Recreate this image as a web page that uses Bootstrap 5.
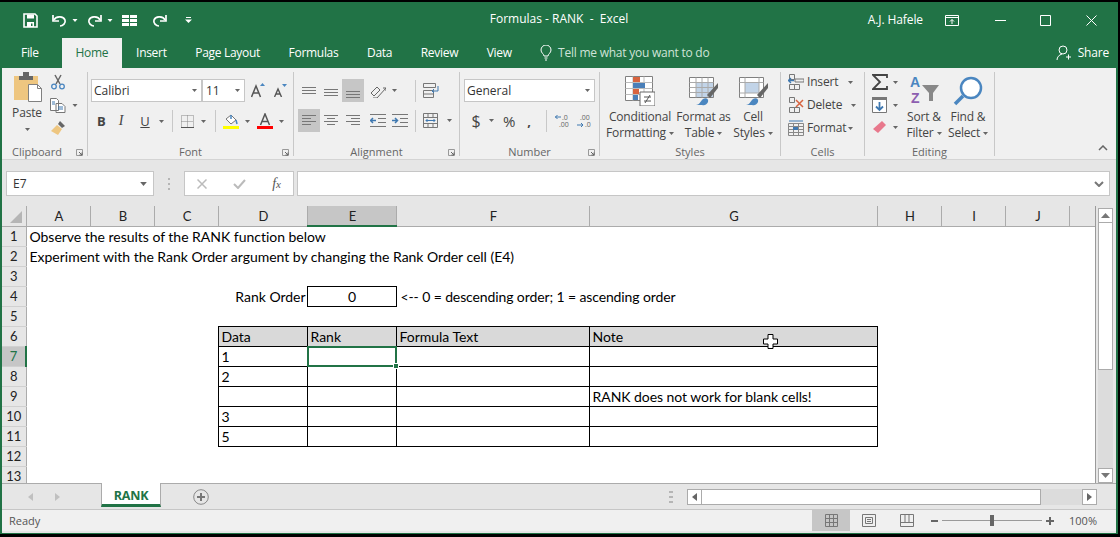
<!DOCTYPE html>
<html lang="en"><head><meta charset="utf-8"><title>Formulas - RANK - Excel</title>
<link href="https://cdn.jsdelivr.net/npm/bootstrap@5.3.0/dist/css/bootstrap.min.css" rel="stylesheet">
<style>
html,body{margin:0;height:537px;overflow:hidden;background:#000}
body{font-family:"Open Sans","Noto Sans",sans-serif;font-size:12px;color:#444;padding-top:2px;padding-bottom:3px}
svg{display:block;flex:none}
.xl-win{width:1118px;height:532px;background:#e6e6e6;border-left:2px solid #217346;border-right:2px solid #217346;border-bottom:1px solid #217346;display:flex;flex-direction:column;overflow:hidden}
.xl-title{height:36px;background:#217346;color:#fff;flex:none;padding-left:21px;position:relative}
.xl-title-text{position:absolute;left:0;right:0;top:0;line-height:34px;text-align:center;font-size:12px}
.xl-hafele{position:relative;letter-spacing:-.1px}
.xl-tabs{height:30px;background:#217346;flex:none;color:#fff}
.xl-tabs .nav-link{color:#fff;font-size:12px;letter-spacing:-.3px;padding:0 14.3px;line-height:30px;height:30px}
.xl-tabs .xl-file{padding:0 23px 0 19px}
.xl-tabs .xl-active{background:#f0f0f0;color:#217346;padding:0;width:60px;text-align:center}
.xl-tell{color:#cfe3d8;margin-left:14px;letter-spacing:-.24px}
.xl-share{margin-left:auto;padding-right:7px;gap:6px;color:#fff;letter-spacing:-.2px}
.xl-ribbon{height:92px;background:#f0f0f0;border-bottom:1px solid #d4d4d4;flex:none}
.rg{position:relative;flex:none;border-right:1px solid #c8c8c8;margin:4px 0;height:84px}
.rg-lab{position:absolute;left:0;right:0;bottom:-3px;text-align:center;line-height:14px;font-size:11px;color:#666;white-space:nowrap}
.rg-lab-clip{right:15px}
.rg-launch{position:absolute;right:4px;bottom:0}
.g1{width:86px}.g2{width:206px}.g3{width:166px}.g4{width:140px}.g5{width:181px}.g6{width:84px}.g7{width:130px}
.combo{height:23px;background:#fff;border:1px solid #c6c6c6;display:flex;align-items:center;justify-content:space-between;padding:0 4px 0 2px;font-size:12px;color:#333}
.cb-font{width:111px}.cb-size{width:43px}.cb-num{width:131px;margin:7px 0 0 4px}
.rowa{display:flex;align-items:center}
.rw-top{margin-top:7px;height:23px}.rw-bot{margin-top:7px;height:23px}
.ml3{margin-left:3px}.ml4{margin-left:4px}.ml8{margin-left:8px}.ml9{margin-left:9px}.ml11{margin-left:11px}
.lbl{font-size:12px;line-height:16px;color:#444;text-align:center;white-space:nowrap;letter-spacing:-.17px}
.sel{background:#c6c6c6}
.big{display:flex;flex-direction:column;align-items:center}
.vsep{width:1px;height:22px;background:#c8c8c8;flex:none}
.t3{margin-top:3px}.t2{margin-top:2px}.t7{margin-top:7px}.t8{margin-top:8px}
.gp{gap:7px}.pt2x{padding-top:2px}.pt4x{padding-top:4px}
.b-b{font-size:13px;width:8px;font-weight:700}
.b-i{font-size:14px;font-family:"Liberation Serif",serif;width:8px;font-style:italic}
.b-u{font-size:13px;width:10px;text-decoration:underline}
.sel-sq{width:22px;height:23px}
.sel-end{padding-bottom:4px}
.up4{margin-top:4px}
.n-d{font-size:16px;width:10px}.n-p{font-size:15px;width:12px}.n-c{font-size:13px;width:4px;font-weight:700}
.cw-cf{width:80px}.cw-ft{width:47px}.cw-cs{width:40px;margin-left:6px}
.cw-ed{width:30px}.cw-so{width:44px;padding-top:2px}
.xl-fbar{height:46px;flex:none;padding:11px 0 0 4px}
.fb-box{height:25px;background:#fff;border:1px solid #c6c6c6;display:flex;align-items:center}
.fb-name{width:148px;justify-content:space-between;padding:0 6px;font-size:12px;color:#333}
.fb-btns{width:110px;margin-left:31px;justify-content:space-between;padding:0 12px 0 12px}
.fb-input{width:813px;margin-left:3px;justify-content:flex-end;padding-right:5px}
.fb-dots{width:2px;height:12px;margin:7px -17px 0 14px;background:repeating-linear-gradient(#b5b5b5 0 2px,transparent 2px 5px)}
.fx{font-family:"Liberation Serif",serif;font-size:14px;font-style:italic;color:#555}
.fx span{font-size:11px}
.xl-main{height:277px;flex:none;position:relative}
.xl-grid{width:1094px;height:277px;overflow:hidden;border-right:1px solid #9a9a9a;background:#fff;flex:none;position:relative}
.sheet{border-collapse:collapse;table-layout:fixed;width:1097px;font-family:Lato,"Liberation Sans",sans-serif;font-size:14px;letter-spacing:-.02px;color:#000;background:#fff}
.sheet td{padding:1px 2px 0 3px;height:20px;line-height:18px;white-space:nowrap;font-weight:400;overflow:visible}
.sheet .ch{background:#e6e6e6;text-align:center;border-right:1px solid #ababab;border-bottom:1px solid #ababab;color:#222;font-size:13px;padding:1px 1px 0 3px}
.sheet .ch-corner{background:#e6e6e6;border-right:1px solid #ababab;border-bottom:1px solid #ababab;padding:3px 0 0 8px}
.sheet .ch-on{background:#c6c6c6;border-bottom:2px solid #217346}
.sheet .rh{background:#e6e6e6;text-align:center;border-right:1px solid #ababab;border-bottom:1px solid #d0d0d0;color:#222;font-size:13px;padding:0}
.sheet .rh-on{background:#c6c6c6;color:#217346;border-right:2px solid #217346}
.sheet .bx{border:1px solid #000}
.sheet .hd{background:#d9d9d9}
.sheet .nar{letter-spacing:-.11px}
.sheet .nar2{letter-spacing:-.06px}
.sheet .rgt{text-align:right;padding-right:1px}
.sheet .cent{text-align:center}
.cw24{width:24px}.cw64{width:64px}.cw89{width:89px}.cw193{width:193px}.cw288{width:288px}.cw30{width:30px}
.sel-cell{position:relative}
.sel-box{position:absolute;left:-1px;top:-1px;right:-1px;bottom:-1px;border:2px solid #217346}
.sel-box::after{content:"";position:absolute;right:-4px;bottom:-4px;width:6px;height:6px;background:#217346;border:1px solid #fff}
.ptr{position:absolute;left:761px;top:128px}
.vbar{width:15px;flex:none;margin:2px 0 0 2px;display:flex;flex-direction:column;background:#dcdcdc;height:275px}
.sbtn{background:#fff;border:1px solid #ababab;display:flex;align-items:center;justify-content:center;flex:none}
.v-btn{width:15px;height:15px}
.v-thumb{height:147px;background:#fff;border:1px solid #ababab;border-top:0;width:15px;flex:none}
.vbar-in{width:15px;flex:1 1 auto}
.xl-sheetbar{height:27px;flex:none;background:#e6e6e6;border-top:1px solid #ababab;border-bottom:1px solid #c6c6c6}
.sb-nav{width:99px;padding-left:26px;gap:22px}
.sb-tab{width:60px;height:24px;background:#fff;border:1px solid #ababab;border-top:0;border-bottom:3px solid #217346;margin-top:-1px;color:#217346;font-weight:700;font-size:12.5px;text-align:center;line-height:25px;letter-spacing:-.2px}
.sb-plus{margin-left:32px}
.sb-dots{margin-left:460px;width:4px;height:12px;background:repeating-linear-gradient(#b5b5b5 0 2px,transparent 2px 5px)}
.hsb{margin-left:14px;width:410px;height:16px;background:#dcdcdc}
.hsb .sbtn{width:15px;height:16px}
.h-thumb{width:339px;height:16px;background:#fff;border:1px solid #ababab;border-left:0;flex:none}
.h-track{flex:1 1 auto}
.xl-status{height:21px;flex:none;background:#f0f0f0;color:#555;font-size:11px;line-height:21px;padding-left:7px}
.st-view{width:38px;height:21px;display:flex;align-items:center;justify-content:center;flex:none}
.st-right{margin-left:auto;padding-right:19px}
.zm-track{width:100px;height:1px;background:#9a9a9a;position:relative;margin:0 4px 0 4px}
.zm-thumb{position:absolute;left:48px;top:-5px;width:4px;height:11px;background:#666}
.ov{overflow:visible}
.s1{margin-left:1px}.s2{margin-left:2px}.s3{margin-left:3px}.s4{margin-left:4px}.s5{margin-left:5px}.s6{margin-left:6px}.s7{margin-left:7px}.s8{margin-left:8px}.s9{margin-left:9px}.s10{margin-left:10px}.s12{margin-left:12px}.s14{margin-left:14px}.s15{margin-left:15px}.s18{margin-left:18px}.s22{margin-left:22px}.s34{margin-left:34px}.s35{margin-left:35px}.s36{margin-left:36px}.e19{margin-right:19px}
</style></head>
<body>
<svg width="0" height="0" class="position-absolute"><defs>
<symbol id="c" viewBox="0 0 5 3"><path d="M0 0h5L2.500 3z" fill="#666"/></symbol>
<symbol id="cw" viewBox="0 0 5 3"><path d="M0 0h5L2.500 3z" fill="#fff"/></symbol>
<symbol id="lau" viewBox="0 0 7 7"><path d="M.5.500h6v6h-6z" fill="none" stroke="#999"/><path d="M3 3l3 3M6 3.500V6H3.500" fill="none" stroke="#666"/></symbol>
<symbol id="undo" viewBox="0 0 15 13"><path d="M2 6c1.500-3.500 9-5 11 0 1 3-2 6-5 6" fill="none" stroke="#fff" stroke-width="1.700"/><path d="M1 1v6h6" fill="none" stroke="#fff" stroke-width="1.700"/></symbol>
<symbol id="redo" viewBox="0 0 15 13"><g transform="matrix(-1 0 0 1 15 0)"><path d="M2 6c1.500-3.500 9-5 11 0 1 3-2 6-5 6" fill="none" stroke="#fff" stroke-width="1.700"/><path d="M1 1v6h6" fill="none" stroke="#fff" stroke-width="1.700"/></g></symbol>
<symbol id="brush" viewBox="0 0 29 30"><path d="M29 7L18 19l3 3L29 12z" fill="#666"/><path d="M7 29c3 0 4-3 7-6 3-2 6 0 5 3-1 2-3 4-6 3z" fill="#4a86c0"/></symbol>
</defs></svg>
<div class="xl-win">
<div class="xl-title d-flex align-items-center">
<svg width="15" height="15" viewBox="0 0 15 15"><path d="M1 1h11l2 2v11H1z" fill="none" stroke="#fff" stroke-width="1.600"/><path d="M4 1.500h7v4H4z" fill="#fff"/><path d="M4 9h7v5H4z" fill="#fff"/><path d="M8 10.500h1.500v2.500H8z" fill="#217346"/></svg>
<svg class="s14" width="15" height="13"><use href="#undo"/></svg>
<svg class="s5" width="6" height="3"><use href="#cw"/></svg>
<svg class="s9" width="15" height="13"><use href="#redo"/></svg>
<svg class="s5" width="6" height="3"><use href="#cw"/></svg>
<svg class="s9" width="15" height="11" viewBox="0 0 15 11"><path d="M0 0h7v3H0zM8 0h7v3H8zM0 4h7v3H0zM8 4h7v3H8zM0 8h7v3H0zM8 8h7v3H8z" fill="#fff"/></svg>
<svg class="s15" width="15" height="13"><use href="#redo"/></svg>
<svg class="s18" width="7" height="6" viewBox="0 0 7 6"><path d="M1 .5h5" stroke="#fff"/><path d="M0 2.500h7L3.500 6z" fill="#fff"/></svg>
<div class="xl-title-text">Formulas - RANK &nbsp;-&nbsp; Excel</div>
<div class="ms-auto d-flex align-items-center">
<span class="xl-hafele">A.J. Hafele</span>
<svg class="s22" width="14" height="11" viewBox="0 0 14 11"><path d="M.5.500h13v10H.5zM.5 2.500h13" fill="none" stroke="#fff"/><path d="M7 9V4.500M5 6.500l2-2 2 2" fill="none" stroke="#fff"/></svg>
<svg class="s36" width="11" height="1"><path d="M0 .5h11" stroke="#fff"/></svg>
<svg class="s34" width="11" height="11"><path d="M.5.500h10v10H.5z" fill="none" stroke="#fff"/></svg>
<svg class="s35 e19" width="11" height="11"><path d="M.5.500l10 10M10.500.5l-10 10" stroke="#fff"/></svg>
</div>
</div>
<ul class="nav xl-tabs flex-nowrap align-items-center">
<li class="nav-item"><span class="nav-link xl-file">File</span></li>
<li class="nav-item"><span class="nav-link xl-active">Home</span></li>
<li class="nav-item"><span class="nav-link">Insert</span></li>
<li class="nav-item"><span class="nav-link">Page Layout</span></li>
<li class="nav-item"><span class="nav-link">Formulas</span></li>
<li class="nav-item"><span class="nav-link">Data</span></li>
<li class="nav-item"><span class="nav-link">Review</span></li>
<li class="nav-item"><span class="nav-link">View</span></li>
<li class="nav-item d-flex align-items-center xl-tell"><svg width="12" height="16" viewBox="0 0 12 16"><path d="M4 11c0-2-3-3-3-6a5 5 0 0 1 10 0c0 3-3 4-3 6zM4.500 13h3M5 15h2" fill="none" stroke="#fff"/></svg><span class="s6">Tell me what you want to do</span></li>
<li class="nav-item d-flex align-items-center xl-share"><svg width="16" height="16" viewBox="0 0 16 16"><circle cx="7" cy="5" r="4" fill="none" stroke="#fff"/><path d="M1 15c0-3 2-5 5-6M10 12h5M12.500 9.500v5" fill="none" stroke="#fff"/></svg><span>Share</span></li>
</ul>
<div class="xl-ribbon d-flex">
<div class="rg g1"><div class="d-flex">
<div class="big s10"><svg width="30" height="30" viewBox="0 0 30 30"><path d="M2 4h24v24H2z" fill="#eec680"/><path d="M7 4h14v4H7z" fill="#666"/><path d="M11 0h6v4h-6z" fill="#666"/><path d="M16.500 12.500h9l4 4v13h-13z" fill="#fff" stroke="#808080"/><path d="M25.500 12.500v4h4" fill="none" stroke="#808080"/></svg><span class="lbl t3">Paste</span><svg class="t7" width="5" height="3"><use href="#c"/></svg></div>
<div class="d-flex flex-column s8">
<svg class="t2" width="16" height="16" viewBox="0 0 16 16"><path d="M5 1l5 9M11 1L6 10" stroke="#666" stroke-width="1.500"/><circle cx="4" cy="12.500" r="2.300" fill="none" stroke="#4a86c0" stroke-width="1.300"/><circle cx="12" cy="12.500" r="2.300" fill="none" stroke="#4a86c0" stroke-width="1.300"/></svg>
<div class="rowa t7"><svg width="16" height="16" viewBox="0 0 16 16"><path d="M.5 1.500h6l2 2v10H.5zM6 6.500h6l3 3v6H6z" fill="#fff" stroke="#777"/><path d="M8 10h5M8 12h5M2 5h3M2 7h3" stroke="#3f78b0"/></svg><svg class="s6" width="6" height="3"><use href="#c"/></svg></div>
<svg class="t8" width="16" height="15" viewBox="0 0 16 15"><path d="M10 0l5 5-3 2-4-4z" fill="#666"/><path d="M7 4l5 4-4 6-7-4z" fill="#eec680"/></svg>
</div></div>
<div class="rg-lab rg-lab-clip">Clipboard</div><svg class="rg-launch" width="7" height="7"><use href="#lau"/></svg></div>
<div class="rg g2">
<div class="rowa ml3 t7"><div class="combo cb-font"><span>Calibri</span><svg width="5" height="3"><use href="#c"/></svg></div><div class="combo cb-size"><span class="s1">11</span><svg width="5" height="3"><use href="#c"/></svg></div>
<svg class="s6" width="14" height="15" viewBox="0 0 14 15"><path d="M.5 14L5 3l4.500 11M2.500 10h5" fill="none" stroke="#555" stroke-width="1.500"/><path d="M9 3l2.500-3L14 3z" fill="#4a86c0"/></svg>
<svg class="s9" width="13" height="13" viewBox="0 0 13 13"><path d="M.5 13L4 5l3.500 8M2 10h4" fill="none" stroke="#555" stroke-width="1.400"/><path d="M8 0h5l-2.500 3z" fill="#4a86c0"/></svg></div>
<div class="rowa t8 ml9">
<span class="lbl b-b">B</span>
<span class="lbl s12 b-i">I</span>
<span class="lbl s15 b-u">U</span>
<svg class="s9" width="5" height="3"><use href="#c"/></svg>
<span class="vsep s8"></span>
<svg class="s8" width="13" height="13" viewBox="0 0 13 13"><path d="M.5.500h12v12H.5zM6.500.500v12M.5 6.500h12" fill="none" stroke="#888" stroke-dasharray="1 1"/><path d="M0 12.500h13" stroke="#555"/></svg>
<svg class="s7" width="5" height="3"><use href="#c"/></svg>
<span class="vsep s9"></span>
<svg class="s7" width="16" height="16" viewBox="0 0 16 16"><path d="M3 6l5-4 5 5-5 4z" fill="#fff" stroke="#777"/><path d="M8 2v4M13 7l1 4" stroke="#4a86c0" stroke-width="1.500"/><path d="M0 13h16v3H0z" fill="#ff0"/></svg>
<svg class="s6" width="5" height="3"><use href="#c"/></svg>
<svg class="s7" width="16" height="16" viewBox="0 0 16 16"><path d="M3.500 12L8 1l4.500 11M5 8.500h6" fill="none" stroke="#555" stroke-width="1.500"/><path d="M0 13h16v3H0z" fill="#f00"/></svg>
<svg class="s6" width="5" height="3"><use href="#c"/></svg>
</div>
<div class="rg-lab">Font</div><svg class="rg-launch" width="7" height="7"><use href="#lau"/></svg></div>
<div class="rg g3">
<div class="rowa rw-top ml8">
<svg width="14" height="7" viewBox="0 0 14 7"><path d="M0 .5h14M0 3.500h14M0 6.500h14" stroke="#777"/></svg>
<svg class="s8 up4" width="14" height="7" viewBox="0 0 14 7"><path d="M0 .5h14M0 3.500h14M0 6.500h14" stroke="#777"/></svg>
<div class="sel s4 sel-sq sel-end d-flex justify-content-center align-items-end"><svg width="14" height="7" viewBox="0 0 14 7"><path d="M0 .5h14M0 3.500h14M0 6.500h14" stroke="#777"/></svg></div>
<svg class="s6" width="16" height="15" viewBox="0 0 16 15"><path d="M1 10l6-6 3 3-6 6zM3 15h4l9-10M16 5h-3M16 5v3" fill="none" stroke="#666"/></svg>
<svg class="s6" width="5" height="3"><use href="#c"/></svg>
<span class="vsep s18"></span>
<svg class="s7" width="16" height="15" viewBox="0 0 16 15"><path d="M.5.500h12v4H.5zM.5 7.500h10v7H.5zM.5 11h10" fill="none" stroke="#777"/><path d="M15 3v5H9M11 6L9 8l2 2" fill="none" stroke="#3f78b0"/></svg>
</div>
<div class="rowa rw-bot ml4">
<div class="sel sel-sq d-flex align-items-center justify-content-center"><svg width="14" height="13" viewBox="0 0 14 13"><path d="M0 1.500h14M0 4.500h9M0 7.500h14M0 10.500h9" stroke="#777"/></svg></div>
<svg class="s4" width="14" height="13" viewBox="0 0 14 13"><path d="M0 1.500h14M3 4.500h8M0 7.500h14M3 10.500h8" stroke="#777"/></svg>
<svg class="s8" width="14" height="13" viewBox="0 0 14 13"><path d="M0 1.500h14M5 4.500h9M0 7.500h14M5 10.500h9" stroke="#777"/></svg>
<svg class="s10" width="16" height="13" viewBox="0 0 16 13"><path d="M0 .5h16M8 4.500h8M8 8.500h8M0 12.500h16" stroke="#777"/><path d="M6 6.500H1M3 4L.5 6.500 3 9" fill="none" stroke="#3f78b0" stroke-width="1.500"/></svg>
<svg class="s6" width="16" height="13" viewBox="0 0 16 13"><path d="M0 .5h16M8 4.500h8M8 8.500h8M0 12.500h16" stroke="#777"/><path d="M0 6.500h5M3 4l2.500 2.500L3 9" fill="none" stroke="#3f78b0" stroke-width="1.500"/></svg>
<span class="vsep s7"></span>
<svg class="s7" width="15" height="15" viewBox="0 0 15 15"><path d="M.5.500h14v14H.5zM.5 4.500h14M.5 10.500h14M5 .5v4M10 .5v4M5 10.500v4M10 10.500v4" fill="none" stroke="#777"/><path d="M3 7.500h9M4.500 6L3 7.500 4.500 9M10.500 6L12 7.500 10.500 9" fill="none" stroke="#3f78b0"/></svg>
<svg class="s9" width="5" height="3"><use href="#c"/></svg>
</div>
<div class="rg-lab">Alignment</div><svg class="rg-launch" width="7" height="7"><use href="#lau"/></svg></div>
<div class="rg g4">
<div class="combo cb-num"><span>General</span><svg width="5" height="3"><use href="#c"/></svg></div>
<div class="rowa rw-bot ml11">
<span class="lbl n-d">$</span><svg class="s8" width="5" height="3"><use href="#c"/></svg>
<span class="lbl s9 n-p">%</span>
<span class="lbl s12 n-c">,</span>
<span class="vsep s15"></span>
<svg class="s8" width="14" height="14" viewBox="0 0 14 14"><text x="7" y="6" font-size="7" fill="#666" font-family="Open Sans">.0</text><text x="4" y="13" font-size="7" fill="#666" font-family="Open Sans">.00</text><path d="M6 3H0M2.500 1L.5 3l2 2" fill="none" stroke="#3f78b0"/></svg>
<svg class="s8" width="14" height="14" viewBox="0 0 14 14"><text x="3" y="6" font-size="7" fill="#666" font-family="Open Sans">.00</text><text x="8" y="13" font-size="7" fill="#666" font-family="Open Sans">.0</text><path d="M0 11h6M4 9l2 2-2 2" fill="none" stroke="#3f78b0"/></svg>
</div>
<div class="rg-lab">Number</div><svg class="rg-launch" width="7" height="7"><use href="#lau"/></svg></div>
<div class="rg g5"><div class="d-flex pt4x">
<div class="big cw-cf"><svg width="30" height="30" viewBox="0 0 30 30"><path d="M.5.500h27v24H.5z" fill="#fff" stroke="#808080"/><path d="M.5 6.500h27M.5 12.500h27M.5 18.500h27M8 .5v24M19 .5v24" stroke="#bbb"/><path d="M8 1h7v5H8zM8 13h6v5H8z" fill="#d8643f"/><path d="M8 7h12v5H8zM8 19h5v5H8z" fill="#4a7fb8"/><path d="M15 16h15v14H15z" fill="#fff" stroke="#666"/><path d="M19 21h7M19 25h7M25 19l-5 8" stroke="#555"/></svg><span class="lbl t3">Conditional</span><span class="lbl">Formatting <svg class="d-inline-block align-middle" width="5" height="3"><use href="#c"/></svg></span></div>
<div class="big cw-ft"><svg width="29" height="30" viewBox="0 0 29 30"><path d="M.5 1.500h24v20H.5z" fill="#fff" stroke="#808080"/><path d="M7 6h17v15H7z" fill="#c2d4e8"/><path d="M.5 6.500h24M.5 11.500h24M.5 16.500h24M7 1.500v20M13 1.500v20M19 1.500v20" stroke="#aaa"/><use href="#brush" width="29" height="30"/></svg><span class="lbl t3">Format as</span><span class="lbl">Table <svg class="d-inline-block align-middle" width="5" height="3"><use href="#c"/></svg></span></div>
<div class="big cw-cs"><svg width="29" height="30" viewBox="0 0 29 30"><path d="M.5 1.500h24v20H.5z" fill="#fff" stroke="#808080"/><path d="M6 6h14v11H6z" fill="#c2d4e8"/><path d="M.5 6.500h24M.5 17h24M6 1.500v20M20 1.500v20" stroke="#aaa"/><use href="#brush" width="29" height="30"/></svg><span class="lbl t3">Cell</span><span class="lbl">Styles <svg class="d-inline-block align-middle" width="5" height="3"><use href="#c"/></svg></span></div>
</div><div class="rg-lab">Styles</div></div>
<div class="rg g6"><div class="d-flex flex-column s7 pt2x gp">
<div class="rowa"><svg width="16" height="16" viewBox="0 0 16 16"><path d="M1.500.500h5v5h-5zM1.500 10.500h5v5h-5zM6.500 10.500h5v5h-5zM7 5h9v3H7z" fill="none" stroke="#777"/><path d="M6 6.500H0M3 4L.5 6.500 3 9" fill="none" stroke="#3f78b0" stroke-width="1.300"/></svg><span class="lbl s3">Insert</span><svg class="s10" width="5" height="3"><use href="#c"/></svg></div>
<div class="rowa"><svg width="16" height="16" viewBox="0 0 16 16"><path d="M1.500.500h5v5h-5zM1.500 10.500h5v5h-5zM6.500 10.500h5v5h-5z" fill="none" stroke="#777"/><path d="M8 3l7 7M15 3l-7 7" stroke="#d8643f" stroke-width="1.500"/></svg><span class="lbl s3">Delete</span><svg class="s9" width="5" height="3"><use href="#c"/></svg></div>
<div class="rowa"><svg width="16" height="16" viewBox="0 0 16 16"><path d="M.5 3.500h15v12H.5zM.5 6.500h15M.5 9.500h15M.5 12.500h15M5.500 3.500v12M10.500 3.500v12" fill="none" stroke="#888"/><path d="M5 7h5v3H5z" fill="#3f78b0"/><path d="M1 1h14" stroke="#3f78b0"/></svg><span class="lbl s3">Format</span><svg class="s2" width="5" height="3"><use href="#c"/></svg></div>
</div><div class="rg-lab">Cells</div></div>
<div class="rg g7"><div class="d-flex pt2x">
<div class="d-flex flex-column s7 gp cw-ed">
<div class="rowa"><svg width="16" height="16" viewBox="0 0 16 16"><path d="M15 4V1H1l7 7-7 7h14v-3" fill="none" stroke="#444" stroke-width="1.800"/></svg><svg class="s5" width="5" height="3"><use href="#c"/></svg></div>
<div class="rowa"><svg width="15" height="16" viewBox="0 0 15 16"><path d="M.5.500h14v15H.5z" fill="#fff" stroke="#777"/><path d="M0 0h15v3H0z" fill="#777"/><path d="M7.500 5v8M4 9.500l3.500 3.500L11 9.500" fill="none" stroke="#3f78b0" stroke-width="1.800"/></svg><svg class="s6" width="5" height="3"><use href="#c"/></svg></div>
<div class="rowa"><svg width="15" height="15" viewBox="0 0 15 15"><path d="M10 1l4 4-8 8-5-4z" fill="#e8788c"/></svg><svg class="s6" width="5" height="3"><use href="#c"/></svg></div>
</div>
<div class="big cw-so"><svg class="ov" width="31" height="30" viewBox="0 0 31 30"><text x="1" y="11" font-size="14" font-weight="700" fill="#4a86c0" font-family="Liberation Sans">A</text><text x="2" y="27" font-size="14" font-weight="700" fill="#8d5fb0" font-family="Liberation Sans">Z</text><path d="M13 9h17l-6 8v8h-4v-8z" fill="#888"/></svg><span class="lbl t3">Sort &amp;</span><span class="lbl">Filter <svg class="d-inline-block align-middle" width="5" height="3"><use href="#c"/></svg></span></div>
<div class="big cw-so"><svg width="30" height="30" viewBox="0 0 30 30"><circle cx="18" cy="12" r="10" fill="#fff" stroke="#4a86c0" stroke-width="2.500"/><path d="M10 20L2 28" stroke="#4a86c0" stroke-width="3.500"/></svg><span class="lbl t3">Find &amp;</span><span class="lbl">Select <svg class="d-inline-block align-middle" width="5" height="3"><use href="#c"/></svg></span></div>
</div><div class="rg-lab">Editing</div></div>
<div class="flex-grow-1 d-flex justify-content-end align-items-end pb-2"><svg class="me-2" width="10" height="6" viewBox="0 0 10 6"><path d="M1 5l4-4 4 4" fill="none" stroke="#666" stroke-width="1.500"/></svg></div>
</div>
<div class="xl-fbar d-flex">
<div class="fb-box fb-name"><span>E7</span><svg width="7" height="4"><use href="#c"/></svg></div>
<span class="fb-dots"></span>
<div class="fb-box fb-btns"><svg width="10" height="10" viewBox="0 0 10 10"><path d="M.5.500l9 9M9.500.500l-9 9" stroke="#bbb" stroke-width="1.500"/></svg><svg width="13" height="10" viewBox="0 0 13 10"><path d="M1 5l4 4 7-8" fill="none" stroke="#bbb" stroke-width="2"/></svg><span class="fx">f<span>x</span></span></div>
<div class="fb-box fb-input"><svg width="10" height="6" viewBox="0 0 10 6"><path d="M1 1l4 4 4-4" fill="none" stroke="#777" stroke-width="2"/></svg></div>
</div>
<div class="xl-main d-flex">
<div class="xl-grid">
<table class="sheet">
<colgroup><col class="cw24"><col class="cw64"><col class="cw64"><col class="cw64"><col class="cw89"><col class="cw89"><col class="cw193"><col class="cw288"><col class="cw64"><col class="cw64"><col class="cw64"><col class="cw30"></colgroup>
<tr><td class="ch-corner"><svg width="12" height="12" viewBox="0 0 12 12"><path d="M12 0v12H0z" fill="#b5b5b5"/></svg></td><td class="ch">A</td><td class="ch">B</td><td class="ch">C</td><td class="ch">D</td><td class="ch ch-on">E</td><td class="ch">F</td><td class="ch">G</td><td class="ch">H</td><td class="ch">I</td><td class="ch">J</td><td class="ch"></td></tr>
<tr><td class="rh">1</td><td colspan="11">Observe the results of the RANK function below</td></tr>
<tr><td class="rh">2</td><td colspan="11">Experiment with the Rank Order argument by changing the Rank Order cell (E4)</td></tr>
<tr><td class="rh">3</td><td colspan="11"></td></tr>
<tr><td class="rh">4</td><td colspan="3"></td><td class="rgt">Rank Order</td><td class="bx cent">0</td><td colspan="6" class="ps-1 nar">&lt;-- 0 = descending order; 1 = ascending order</td></tr>
<tr><td class="rh">5</td><td colspan="11"></td></tr>
<tr><td class="rh">6</td><td colspan="3"></td><td class="bx hd">Data</td><td class="bx hd">Rank</td><td class="bx hd">Formula Text</td><td class="bx hd">Note</td><td colspan="4"></td></tr>
<tr><td class="rh rh-on">7</td><td colspan="3"></td><td class="bx">1</td><td class="bx sel-cell"><span class="sel-box"></span></td><td class="bx"></td><td class="bx"></td><td colspan="4"></td></tr>
<tr><td class="rh">8</td><td colspan="3"></td><td class="bx">2</td><td class="bx"></td><td class="bx"></td><td class="bx"></td><td colspan="4"></td></tr>
<tr><td class="rh">9</td><td colspan="3"></td><td class="bx"></td><td class="bx"></td><td class="bx"></td><td class="bx nar2">RANK does not work for blank cells!</td><td colspan="4"></td></tr>
<tr><td class="rh">10</td><td colspan="3"></td><td class="bx">3</td><td class="bx"></td><td class="bx"></td><td class="bx"></td><td colspan="4"></td></tr>
<tr><td class="rh">11</td><td colspan="3"></td><td class="bx">5</td><td class="bx"></td><td class="bx"></td><td class="bx"></td><td colspan="4"></td></tr>
<tr><td class="rh">12</td><td colspan="11"></td></tr>
<tr><td class="rh">13</td><td colspan="11"></td></tr>
</table>
<svg class="ptr" width="15" height="15" viewBox="0 0 15 15"><path d="M5 .5h5v4.500h4.500v5H10v4.500H5V10H.5V5H5z" fill="#fff" stroke="#000"/></svg>
</div>
<div class="vbar">
<div class="sbtn v-btn"><svg width="9" height="5" viewBox="0 0 9 5"><path d="M0 5l4.500-5L9 5z" fill="#777"/></svg></div>
<div class="v-thumb"></div>
<div class="vbar-in"></div>
<div class="sbtn v-btn"><svg width="9" height="5" viewBox="0 0 9 5"><path d="M0 0l4.500 5L9 0z" fill="#777"/></svg></div>
</div>
</div>
<div class="xl-sheetbar d-flex align-items-center">
<div class="sb-nav d-flex align-items-center"><svg width="5" height="8" viewBox="0 0 5 8"><path d="M5 0L0 4l5 4z" fill="#c0c0c0"/></svg><svg width="5" height="8" viewBox="0 0 5 8"><path d="M0 0l5 4-5 4z" fill="#c0c0c0"/></svg></div>
<div class="sb-tab align-self-start">RANK</div>
<svg class="sb-plus" width="16" height="16" viewBox="0 0 16 16"><circle cx="8" cy="8" r="7.300" fill="none" stroke="#888"/><path d="M4 8h8M8 4v8" stroke="#777" stroke-width="2"/></svg>
<span class="sb-dots"></span>
<div class="hsb d-flex">
<div class="sbtn"><svg width="5" height="8" viewBox="0 0 5 8"><path d="M5 0L0 4l5 4z" fill="#666"/></svg></div>
<div class="h-thumb"></div><div class="h-track"></div>
<div class="sbtn"><svg width="5" height="8" viewBox="0 0 5 8"><path d="M0 0l5 4-5 4z" fill="#666"/></svg></div>
</div>
</div>
<div class="xl-status d-flex">
<span>Ready</span>
<div class="st-right d-flex align-items-center">
<div class="st-view sel"><svg width="13" height="13" viewBox="0 0 13 13"><path d="M.5.500h12v12H.5zM.5 4.500h12M.5 8.500h12M4.500.5v12M8.500.5v12" fill="none" stroke="#777"/></svg></div>
<div class="st-view"><svg width="14" height="13" viewBox="0 0 14 13"><path d="M.5.500h13v12H.5zM3.500 3.500h7v6h-7zM5 5.500h4M5 7.500h4" fill="none" stroke="#777"/></svg></div>
<div class="st-view"><svg width="14" height="13" viewBox="0 0 14 13"><path d="M.5.500h13v12H.5zM.5 8.500h13M5 .5v8M9 .5v8" fill="none" stroke="#777"/></svg></div>
<svg class="s5" width="7" height="2"><path d="M0 1h7" stroke="#666" stroke-width="2"/></svg>
<div class="zm-track"><span class="zm-thumb"></span></div>
<svg width="8" height="8"><path d="M0 4h8M4 0v8" stroke="#666" stroke-width="2"/></svg>
<span class="s15">100%</span>
</div>
</div>
</div>
<script src="https://cdn.jsdelivr.net/npm/bootstrap@5.3.0/dist/js/bootstrap.bundle.min.js"></script>
</body></html>
